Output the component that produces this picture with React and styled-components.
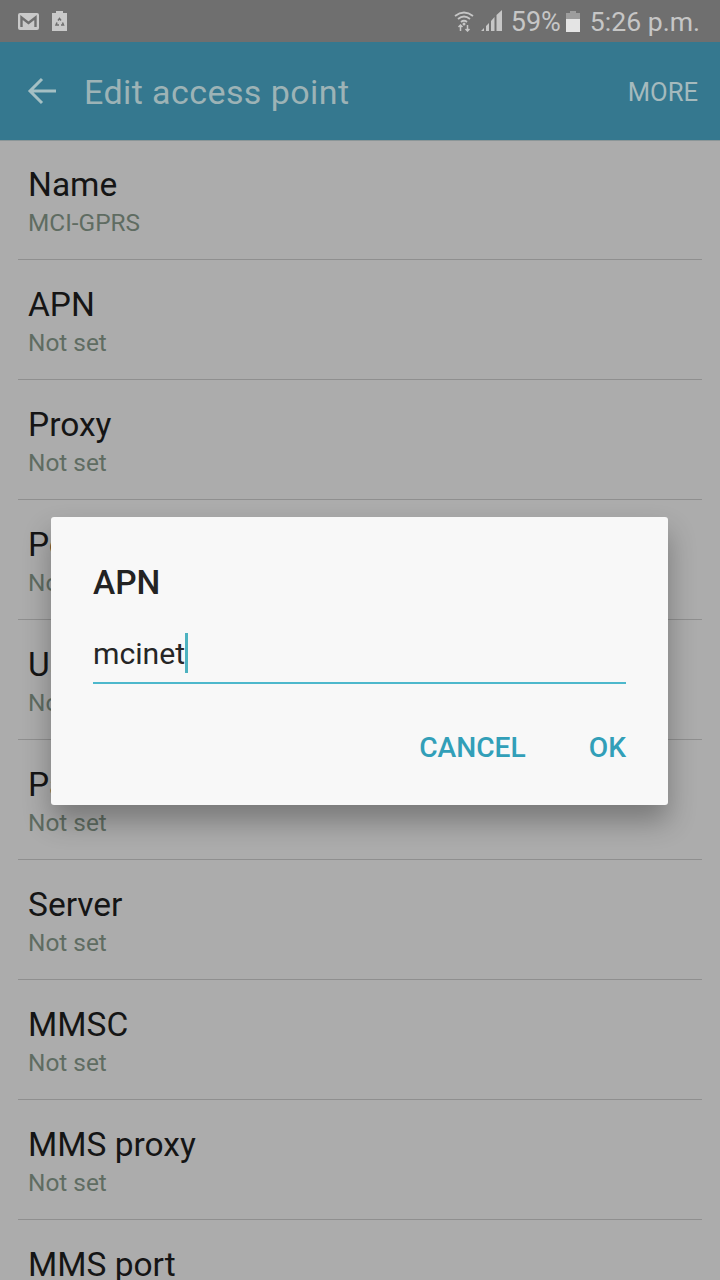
import React from "react";
import styled, { createGlobalStyle } from "styled-components";

const GlobalStyle = createGlobalStyle`
	html, body {
		margin: 0;
		padding: 0;
		height: 1280px;
		overflow: hidden;
		background: #acacac;
		font-family: Roboto, "Liberation Sans", sans-serif;
	}
`;

const Screen = styled.div`
	position: relative;
	width: 720px;
	height: 1280px;
	overflow: hidden;
	background: #acacac;
`;

const StatusBar = styled.div`
	display: flex;
	align-items: center;
	justify-content: space-between;
	height: 42px;
	padding: 0 20px 0 18px;
	background: #6f6f6f;
	color: #c6c6c6;
`;

const StatusGroup = styled.div`
	display: flex;
	align-items: center;
	gap: ${(p) => p.$gap || 0}px;
`;

const StatusText = styled.span`
	margin-left: ${(p) => p.$left}px;
	padding-top: 2px;
	font-size: ${(p) => p.$size}px;
	line-height: 40px;
`;

const Toolbar = styled.div`
	display: flex;
	align-items: center;
	box-sizing: border-box;
	height: 99px;
	padding: 0 22px 1px 27px;
	background: #35788f;
	border-bottom: 1px solid #8b9698;
`;

const Title = styled.div`
	flex: 1;
	margin-left: 27px;
	padding-top: 3px;
	font-size: 34px;
	line-height: 42px;
	letter-spacing: 0.42px;
	color: #9db3b6;
`;

const More = styled.div`
	padding-top: 3px;
	font-size: 25.6px;
	line-height: 42px;
	color: #a5babd;
`;

const List = styled.div`
	display: flex;
	flex-direction: column;
`;

const Row = styled.div`
	display: flex;
	flex-direction: column;
	box-sizing: border-box;
	height: 120px;
	margin: 0 18px;
	padding: 25px 0 0 10px;
	border-bottom: 1px solid #8f8f8f;

	&:first-child {
		height: 119px;
		padding-top: 24px;
	}
`;

const RowName = styled.div`
	font-size: 33.5px;
	line-height: 40px;
	color: #151515;
`;

const RowValue = styled.div`
	font-size: 24.4px;
	line-height: 35px;
	color: #5f6c62;
`;

const Dialog = styled.div`
	position: absolute;
	left: 51px;
	top: 517px;
	box-sizing: border-box;
	width: 617px;
	height: 288px;
	padding: 46px 42px 0;
	border-radius: 3px;
	background: #f8f8f8;
	box-shadow: 0 16px 28px rgba(0, 0, 0, 0.3);
`;

const DialogTitle = styled.div`
	font-size: 33.5px;
	font-weight: 500;
	line-height: 40px;
	color: #232323;
`;

const Field = styled.div`
	display: flex;
	align-items: center;
	height: 59px;
	margin-top: 20px;
	border-bottom: 2px solid #4db8cc;
`;

const FieldText = styled.span`
	padding-top: 2px;
	font-size: 30.2px;
	color: #262626;
`;

const Caret = styled.span`
	width: 3px;
	height: 40px;
	background: #4db2c0;
`;

const Actions = styled.div`
	display: flex;
	justify-content: flex-end;
	gap: 63px;
	margin-top: 44px;
`;

const Action = styled.div`
	font-size: 28.2px;
	font-weight: 500;
	line-height: 40px;
	color: #329fb8;
`;

const rows = [
	["Name", "MCI-GPRS"],
	["APN", "Not set"],
	["Proxy", "Not set"],
	["Port", "Not set"],
	["Username", "Not set"],
	["Password", "Not set"],
	["Server", "Not set"],
	["MMSC", "Not set"],
	["MMS proxy", "Not set"],
	["MMS port", "Not set"],
];

const GmailIcon = () => (
	<svg width="21" height="17" viewBox="0 0 21 17">
		<rect width="21" height="17" rx="2" fill="#c9c9c9" />
		<path d="M3.5 14V4.5L10.5 10L17.5 4.5V14" fill="none" stroke="#6f6f6f" strokeWidth="2.4" />
	</svg>
);

const RecycleIcon = () => (
	<svg width="15" height="20" viewBox="0 0 15 20">
		<path d="M4 0H11V2H15V20H0V2H4Z" fill="#c9c9c9" />
		<path
			d="M6 9.500L7.500 7.500L9 9.500M10.500 11.500L11.500 14H9M7 14H4L5 11.500"
			fill="none"
			stroke="#6f6f6f"
			strokeWidth="1.5"
		/>
	</svg>
);

const WifiIcon = () => (
	<svg width="20" height="22" viewBox="0 0 20 22">
		<path d="M1 6Q10 -1 19 6M4 9Q10 4 16 9M7 12Q10 9.500 13 12" fill="none" stroke="#c6c6c6" strokeWidth="1.8" />
		<circle cx="10" cy="14" r="1.500" fill="#c6c6c6" />
		<path d="M6.500 15V21M4.500 17L6.500 15L8.500 17M13.500 15V21M11.500 19L13.500 21L15.500 19" fill="none" stroke="#c6c6c6" strokeWidth="1.500" />
	</svg>
);

const SignalIcon = styled.svg`
	margin-left: 7px;
`;

const BatteryIcon = styled.svg`
	margin-left: 5px;
`;

const App = () => {
	return (
		<Screen>
			<GlobalStyle />
			<StatusBar>
				<StatusGroup $gap={13}>
					<GmailIcon />
					<RecycleIcon />
				</StatusGroup>
				<StatusGroup>
					<WifiIcon />
					<SignalIcon width="22" height="22" viewBox="0 0 22 22">
						<path d="M0 21L3 18V21ZM5 16L8 13V21H5ZM10 11L13.500 7V21H10ZM15.500 5L21 0V21H15.500Z" fill="#c6c6c6" />
					</SignalIcon>
					<StatusText $left={8} $size={27}>59%</StatusText>
					<BatteryIcon width="14" height="21" viewBox="0 0 14 21">
						<path d="M4 0H10V2H14V21H0V2H4Z" fill="#9d9d9d" />
						<rect y="8" width="14" height="13" fill="#e4e4e4" />
					</BatteryIcon>
					<StatusText $left={10} $size={26.6}>5:26 p.m.</StatusText>
				</StatusGroup>
			</StatusBar>
			<Toolbar>
				<svg width="30" height="28" viewBox="0 0 30 28">
					<path d="M29 14H3M15 2L3 14L15 26" fill="none" stroke="#a5c0c4" strokeWidth="3" />
				</svg>
				<Title>Edit access point</Title>
				<More>MORE</More>
			</Toolbar>
			<List>
				{rows.map(([name, value]) => (
					<Row key={name}>
						<RowName>{name}</RowName>
						<RowValue>{value}</RowValue>
					</Row>
				))}
			</List>
			<Dialog>
				<DialogTitle>APN</DialogTitle>
				<Field>
					<FieldText>mcinet</FieldText>
					<Caret />
				</Field>
				<Actions>
					<Action>CANCEL</Action>
					<Action>OK</Action>
				</Actions>
			</Dialog>
		</Screen>
	);
};

export default App;
